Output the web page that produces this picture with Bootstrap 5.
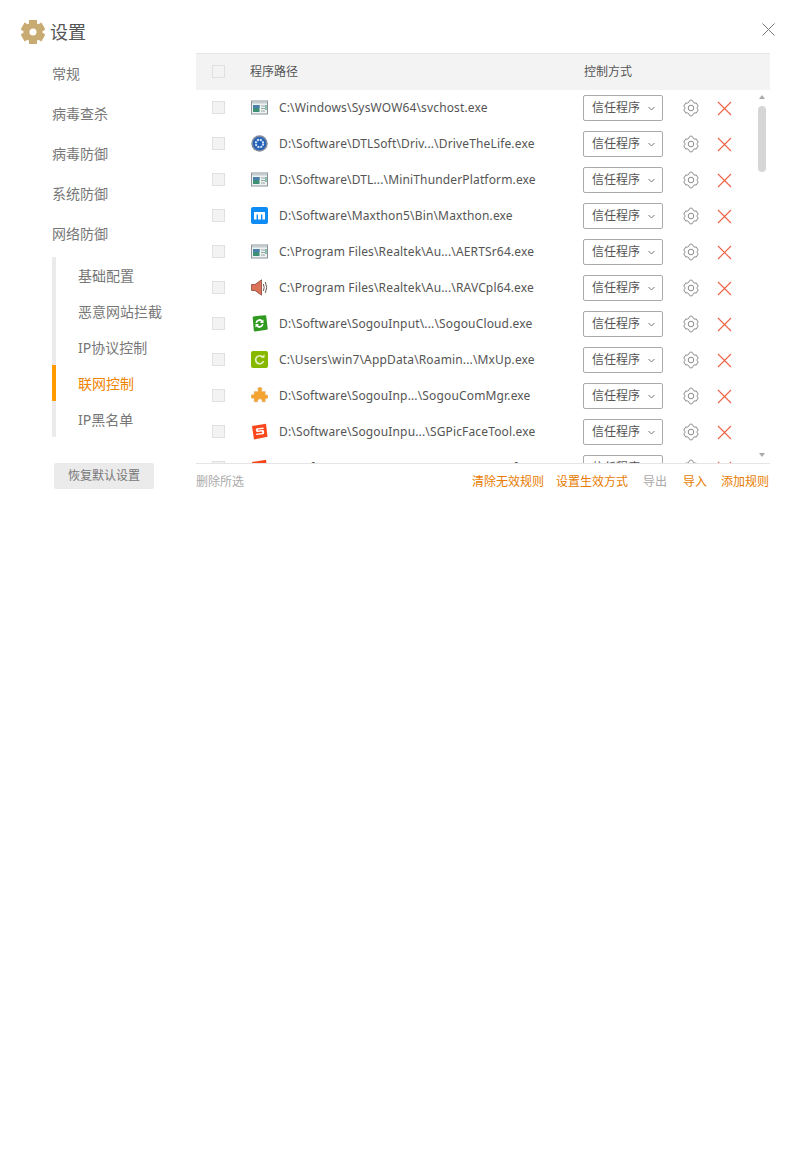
<!DOCTYPE html>
<html lang="zh-CN">
<head>
<meta charset="utf-8">
<title>设置</title>
<link rel="stylesheet" href="https://cdn.jsdelivr.net/npm/bootstrap@5.3.0/dist/css/bootstrap.min.css">
<style>
body{font-family:"Noto Sans","Noto Sans CJK SC",sans-serif;font-size:12px;color:#555;background:#fff;}
.win-head{height:53px;padding:19px 25px 0 21px;}
.win-title{font-size:18px;line-height:26px;color:#555;margin-left:5px;}
.close-x{margin-top:4px;}
.side{width:196px;flex:none;padding-top:1px;}
.side-link{height:40px;line-height:40px;padding:0 0 0 52px;font-size:14px;color:#777;}
.sub-nav{margin:3px 0 0 52px;border-left:4px solid #ebebeb;}
.sub-link{height:36px;line-height:38px;padding:0 0 0 22px;margin-left:-4px;border-left:4px solid transparent;font-size:14px;color:#777;}
.sub-link.on{color:#f08300;border-left-color:#ff9a00;}
.restore{display:block;width:100px;height:26px;margin:26px 0 0 54px;padding:0;border:0;border-radius:2px;background:#ebebeb;color:#777;font-size:12px;line-height:26px;}
.main-pane{width:574px;flex:none;}
.grid-head{height:37px;background:#f3f3f3;border-top:1px solid #e5e5e5;color:#555;}
.check-col{width:54px;padding-left:16px;flex:none;}
.form-check-input.tick{width:13px;height:13px;margin:0 0 1px;display:block;background-color:#f3f3f3;border:1px solid #e0e0e0;border-radius:0;}
.path-head{width:334px;flex:none;}
.rows-box{height:373px;overflow:hidden;}
.rule-row{height:36px;}
.ico-cell{width:29px;flex:none;line-height:0;}
.ico-cell svg{width:17px;height:17px;display:block;margin:0 0 1px 1px;}
.path-cell{width:304px;flex:none;color:#555;font-size:12px;letter-spacing:.15px;white-space:nowrap;overflow:hidden;}
.mode{width:80px;height:26px;flex:none;border:1px solid #aaa;border-radius:2px;padding:0 7px 0 8px;color:#555;font-size:12px;}
.act-gear{margin-left:19px;width:18px;height:18px;flex:none;}
.act-del{margin-left:17px;width:15px;height:15px;flex:none;}
.thumb{position:absolute;left:562px;top:16px;width:8px;height:66px;border-radius:4px;background:#d6d6d6;}
.arrow-up,.arrow-down{position:absolute;left:563px;width:0;height:0;border-left:3px solid transparent;border-right:3px solid transparent;}
.arrow-up{top:5px;border-bottom:4px solid #aaa;}
.arrow-down{top:363px;border-top:4px solid #aaa;}
.foot-bar{height:36px;border-top:1px solid #e5e5e5;padding-right:1px;font-size:12px;color:#aaa;}
.foot-link{color:#e87b00;}
.foot-mute{color:#aaa;}
.ml-a{margin-left:12px;}.ml-b{margin-left:15px;}.ml-c{margin-left:16px;}.ml-d{margin-left:14px;}
.defs-box{position:absolute;}
</style>
</head>
<body>
<svg width="0" height="0" class="defs-box">
<defs>
<symbol id="gear" viewBox="0 0 18 18"><path d="M9 .8l2 1.400.4 1.300 1.400.7 1.400-.3 2 3.200-1 1.100v1.600l1 1.100-2 3.200-1.400-.3-1.400.7-.4 1.300L9 17.200l-2-1.400-.4-1.300-1.400-.7-1.400.3-2-3.200 1-1.100V8.200l-1-1.100 2-3.200 1.400.3 1.400-.7.4-1.300z" fill="none" stroke="#8a8a8a" stroke-width="1" stroke-linejoin="round"/><circle cx="9" cy="9" r="2.800" fill="none" stroke="#8a8a8a"/></symbol>
<symbol id="del" viewBox="0 0 15 15"><path d="M1 1l13 13M14 1L1 14" stroke="#ef6344" stroke-width="1.100" fill="none"/></symbol>
<symbol id="chev" viewBox="0 0 7 5"><path d="M.5 1l3 3 3-3" fill="none" stroke="#777"/></symbol>
<symbol id="i-app" viewBox="0 0 17 17"><rect x=".5" y="2" width="16" height="13" fill="#eef2f2" stroke="#8b9298"/><rect x="1" y="2.500" width="15" height="2" fill="#c5ccd0"/><rect x="2" y="6" width="6.500" height="7" fill="#3f8f77"/><rect x="2" y="6" width="6.500" height="3" fill="#4b7fb0"/><path d="M10 7h4M10 9.500h4M10 12h4" stroke="#9aa7a5"/><path d="M15 6v5" stroke="#2f8d6c"/></symbol>
<symbol id="i-dtl" viewBox="0 0 17 17"><circle cx="8.500" cy="8.500" r="8.200" fill="#7f8a9a"/><circle cx="8.500" cy="8.500" r="6.600" fill="#2260b8"/><circle cx="8.500" cy="8.500" r="3.700" fill="none" stroke="#d5e4f7" stroke-width="2" stroke-dasharray="2 .9"/><circle cx="8.500" cy="8.500" r="1.400" fill="#2260b8"/></symbol>
<symbol id="i-mx" viewBox="0 0 17 17"><rect width="17" height="17" rx="2" fill="#0d8cf5"/><path d="M3 12.500V5h11v7.500h-2.600V7.500H10V12.500H7V7.500H5.600v5z" fill="#fff"/></symbol>
<symbol id="i-snd" viewBox="0 0 17 17"><path d="M.5 5.500h3.500L10.500.8v15.400L4 11.500H.5z" fill="#dc7258" stroke="#8c4a3a" stroke-width=".8"/><path d="M12.300 5q1.800 3.500 0 7M14.300 3q2.800 5.500 0 11" fill="none" stroke="#6d5a52" stroke-width="1"/></symbol>
<symbol id="i-sync" viewBox="0 0 17 17"><path d="M1.700 2.500Q1.500 1.500 2.500 1.400L14 .2q1-.1 1.200.9l1.500 12.500q.1 1-.9 1.200L4 16.500q-1 .1-1.200-.9z" fill="#2f9a1f"/><path d="M4.500 8a4 4 0 0 1 7-2.500l1-1v3.500H9l1.200-1.200A2.500 2.500 0 0 0 6 8zM12.500 9a4 4 0 0 1-7 2.500l-1 1V9H8l-1.200 1.200A2.500 2.500 0 0 0 11 9z" fill="#fff"/></symbol>
<symbol id="i-up" viewBox="0 0 17 17"><rect width="17" height="17" rx="2" fill="#86b800"/><path d="M12 6.500A4 4 0 1 0 12.500 10" fill="none" stroke="#e8f3c8" stroke-width="1.600"/><path d="M10 6.800h3.500V3.300z" fill="#e8f3c8"/></symbol>
<symbol id="i-puz" viewBox="0 0 17 17"><path d="M7 4.200V3.300a2.200 2.200 0 1 1 3.800 0v.9h3.700v3.600a2.100 2.100 0 1 1 0 3.900v3.300h-3.700a2.100 2.100 0 1 0-3.800 0H3v-3.600a2.200 2.200 0 1 1 0-3.900V4.200z" fill="#f4a230" stroke="#e2d6c2" stroke-width=".6"/></symbol>
<symbol id="i-sg" viewBox="0 0 17 17"><path d="M1 3L15 .8l1.500 13L3 16.500z" fill="#f9471c"/><path d="M12.500 4.500L6 5.300Q4.500 5.500 4.800 7l.2 1q.2 1 1.500.9l4.500-.5.200 1.500-6.200.8.200 1.400 6.800-.8q1.300-.2 1.200-1.500l-.2-1.700q-.2-1.200-1.500-1l-4.500.5-.1-1 5.800-.7z" fill="#fff"/></symbol>
</defs>
</svg>

<div class="d-flex align-items-start justify-content-between win-head">
  <div class="d-flex align-items-center">
    <svg width="24" height="24" viewBox="0 0 24 24"><g stroke="#c8ab72" stroke-width="8"><path d="M12 0v24M1.600 6l20.800 12M22.400 6L1.600 18"/></g><circle cx="12" cy="12" r="9.600" fill="#c8ab72"/><circle cx="12" cy="12" r="3.500" fill="#fff"/></svg>
    <span class="win-title">设置</span>
  </div>
  <svg class="close-x" width="13" height="13" viewBox="0 0 13 13"><path d="M.5.500l12 12M12.500.500l-12 12" stroke="#777" fill="none"/></svg>
</div>

<div class="d-flex">
  <div class="side">
    <div class="nav flex-column">
      <div class="side-link">常规</div>
      <div class="side-link">病毒查杀</div>
      <div class="side-link">病毒防御</div>
      <div class="side-link">系统防御</div>
      <div class="side-link">网络防御</div>
    </div>
    <div class="sub-nav nav flex-column">
      <div class="sub-link">基础配置</div>
      <div class="sub-link">恶意网站拦截</div>
      <div class="sub-link">IP协议控制</div>
      <div class="sub-link on">联网控制</div>
      <div class="sub-link">IP黑名单</div>
    </div>
    <button type="button" class="btn restore">恢复默认设置</button>
  </div>

  <div class="main-pane">
    <div class="d-flex align-items-center grid-head">
      <div class="check-col"><input class="form-check-input tick" type="checkbox" aria-label="全选"></div>
      <div class="path-head">程序路径</div>
      <div>控制方式</div>
    </div>
    <div class="position-relative">
      <div class="rows-box">
        <div class="d-flex align-items-center rule-row"><div class="check-col"><input class="form-check-input tick" type="checkbox" aria-label="选择"></div><div class="ico-cell"><svg><use href="#i-app"/></svg></div><div class="path-cell">C:\Windows\SysWOW64\svchost.exe</div><div class="d-flex align-items-center justify-content-between mode"><span>信任程序</span><svg width="7" height="5"><use href="#chev"/></svg></div><svg class="act-gear"><use href="#gear"/></svg><svg class="act-del"><use href="#del"/></svg></div>
        <div class="d-flex align-items-center rule-row"><div class="check-col"><input class="form-check-input tick" type="checkbox" aria-label="选择"></div><div class="ico-cell"><svg><use href="#i-dtl"/></svg></div><div class="path-cell">D:\Software\DTLSoft\Driv...\DriveTheLife.exe</div><div class="d-flex align-items-center justify-content-between mode"><span>信任程序</span><svg width="7" height="5"><use href="#chev"/></svg></div><svg class="act-gear"><use href="#gear"/></svg><svg class="act-del"><use href="#del"/></svg></div>
        <div class="d-flex align-items-center rule-row"><div class="check-col"><input class="form-check-input tick" type="checkbox" aria-label="选择"></div><div class="ico-cell"><svg><use href="#i-app"/></svg></div><div class="path-cell">D:\Software\DTL...\MiniThunderPlatform.exe</div><div class="d-flex align-items-center justify-content-between mode"><span>信任程序</span><svg width="7" height="5"><use href="#chev"/></svg></div><svg class="act-gear"><use href="#gear"/></svg><svg class="act-del"><use href="#del"/></svg></div>
        <div class="d-flex align-items-center rule-row"><div class="check-col"><input class="form-check-input tick" type="checkbox" aria-label="选择"></div><div class="ico-cell"><svg><use href="#i-mx"/></svg></div><div class="path-cell">D:\Software\Maxthon5\Bin\Maxthon.exe</div><div class="d-flex align-items-center justify-content-between mode"><span>信任程序</span><svg width="7" height="5"><use href="#chev"/></svg></div><svg class="act-gear"><use href="#gear"/></svg><svg class="act-del"><use href="#del"/></svg></div>
        <div class="d-flex align-items-center rule-row"><div class="check-col"><input class="form-check-input tick" type="checkbox" aria-label="选择"></div><div class="ico-cell"><svg><use href="#i-app"/></svg></div><div class="path-cell">C:\Program Files\Realtek\Au...\AERTSr64.exe</div><div class="d-flex align-items-center justify-content-between mode"><span>信任程序</span><svg width="7" height="5"><use href="#chev"/></svg></div><svg class="act-gear"><use href="#gear"/></svg><svg class="act-del"><use href="#del"/></svg></div>
        <div class="d-flex align-items-center rule-row"><div class="check-col"><input class="form-check-input tick" type="checkbox" aria-label="选择"></div><div class="ico-cell"><svg><use href="#i-snd"/></svg></div><div class="path-cell">C:\Program Files\Realtek\Au...\RAVCpl64.exe</div><div class="d-flex align-items-center justify-content-between mode"><span>信任程序</span><svg width="7" height="5"><use href="#chev"/></svg></div><svg class="act-gear"><use href="#gear"/></svg><svg class="act-del"><use href="#del"/></svg></div>
        <div class="d-flex align-items-center rule-row"><div class="check-col"><input class="form-check-input tick" type="checkbox" aria-label="选择"></div><div class="ico-cell"><svg><use href="#i-sync"/></svg></div><div class="path-cell">D:\Software\SogouInput\...\SogouCloud.exe</div><div class="d-flex align-items-center justify-content-between mode"><span>信任程序</span><svg width="7" height="5"><use href="#chev"/></svg></div><svg class="act-gear"><use href="#gear"/></svg><svg class="act-del"><use href="#del"/></svg></div>
        <div class="d-flex align-items-center rule-row"><div class="check-col"><input class="form-check-input tick" type="checkbox" aria-label="选择"></div><div class="ico-cell"><svg><use href="#i-up"/></svg></div><div class="path-cell">C:\Users\win7\AppData\Roamin...\MxUp.exe</div><div class="d-flex align-items-center justify-content-between mode"><span>信任程序</span><svg width="7" height="5"><use href="#chev"/></svg></div><svg class="act-gear"><use href="#gear"/></svg><svg class="act-del"><use href="#del"/></svg></div>
        <div class="d-flex align-items-center rule-row"><div class="check-col"><input class="form-check-input tick" type="checkbox" aria-label="选择"></div><div class="ico-cell"><svg><use href="#i-puz"/></svg></div><div class="path-cell">D:\Software\SogouInp...\SogouComMgr.exe</div><div class="d-flex align-items-center justify-content-between mode"><span>信任程序</span><svg width="7" height="5"><use href="#chev"/></svg></div><svg class="act-gear"><use href="#gear"/></svg><svg class="act-del"><use href="#del"/></svg></div>
        <div class="d-flex align-items-center rule-row"><div class="check-col"><input class="form-check-input tick" type="checkbox" aria-label="选择"></div><div class="ico-cell"><svg><use href="#i-sg"/></svg></div><div class="path-cell">D:\Software\SogouInpu...\SGPicFaceTool.exe</div><div class="d-flex align-items-center justify-content-between mode"><span>信任程序</span><svg width="7" height="5"><use href="#chev"/></svg></div><svg class="act-gear"><use href="#gear"/></svg><svg class="act-del"><use href="#del"/></svg></div>
        <div class="d-flex align-items-center rule-row"><div class="check-col"><input class="form-check-input tick" type="checkbox" aria-label="选择"></div><div class="ico-cell"><svg><use href="#i-sg"/></svg></div><div class="path-cell">D:\Software\SogouInpu...\SogouSmartInfo.exe</div><div class="d-flex align-items-center justify-content-between mode"><span>信任程序</span><svg width="7" height="5"><use href="#chev"/></svg></div><svg class="act-gear"><use href="#gear"/></svg><svg class="act-del"><use href="#del"/></svg></div>
      </div>
      <div class="arrow-up"></div>
      <div class="thumb"></div>
      <div class="arrow-down"></div>
    </div>
    <div class="d-flex align-items-center foot-bar">
      <span class="me-auto">删除所选</span>
      <span class="foot-link">清除无效规则</span>
      <span class="foot-link ml-a">设置生效方式</span>
      <span class="foot-mute ml-b">导出</span>
      <span class="foot-link ml-c">导入</span>
      <span class="foot-link ml-d">添加规则</span>
    </div>
  </div>
</div>
<script src="https://cdn.jsdelivr.net/npm/bootstrap@5.3.0/dist/js/bootstrap.bundle.min.js"></script>
</body>
</html>
